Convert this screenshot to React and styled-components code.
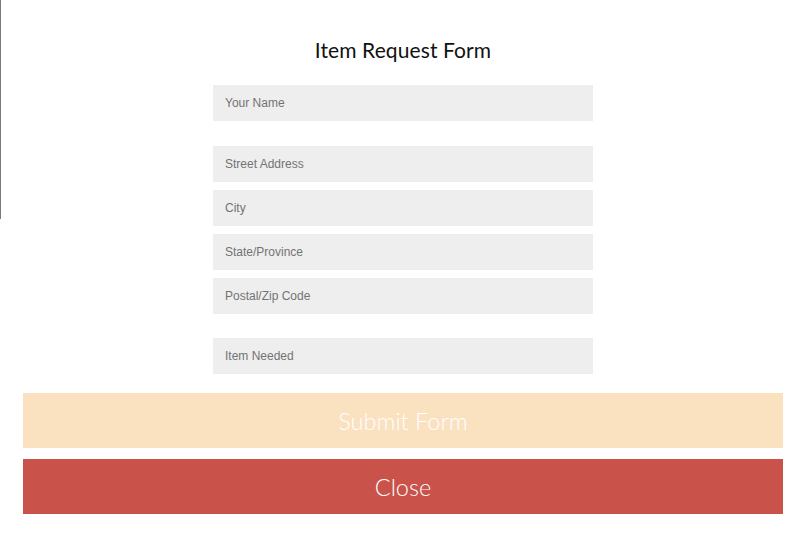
import React from "react";
import styled, { createGlobalStyle } from "styled-components";

const Global = createGlobalStyle`
  html, body { margin: 0; padding: 0; background: #fff; }
  body { font-family: "Lato", "Noto Sans", sans-serif; }
`;

const Page = styled.div`
  position: relative;
  width: 806px;
  height: 546px;
  overflow: hidden;
  background: #fff;
`;

const EdgeLine = styled.div`
  position: absolute;
  left: 0;
  top: 0;
  width: 1px;
  height: 219px;
  background: #7a7a7a;
`;

const Modal = styled.div`
  display: flex;
  flex-direction: column;
  align-items: center;
  padding: 37px 23px 0;
`;

const Title = styled.h1`
  margin: 0 0 22px;
  font-family: "Lato", "Noto Sans", sans-serif;
  font-weight: 400;
  font-size: 21px;
  line-height: 26px;
  color: #111;
  letter-spacing: 0.1px;
`;

const Form = styled.form`
  display: flex;
  flex-direction: column;
  align-items: center;
  width: 100%;
`;

const Group = styled.div`
  display: flex;
  flex-direction: column;
  gap: 8px;
  margin-bottom: ${(p) => p.$after || 0}px;
`;

const Input = styled.input`
  box-sizing: border-box;
  width: 380px;
  height: 36px;
  border: none;
  outline: none;
  background: #eeeeee;
  padding: 0 12px;
  font-family: "Liberation Sans", Arial, sans-serif;
  font-size: 12px;
  color: #333;
  &::placeholder { color: #737373; }
`;

const Button = styled.button`
  box-sizing: border-box;
  width: 100%;
  height: 55px;
  border: none;
  background: ${(p) => p.$bg};
  color: #fff;
  font-family: "Lato", "Noto Sans", sans-serif;
  font-weight: ${(p) => p.$weight || 400};
  font-size: 23.5px;
  margin-top: ${(p) => p.$mt}px;
  cursor: pointer;
`;

export default function App() {
  return (
    <>
      <Global />
      <Page>
        <EdgeLine />
        <Modal>
          <Title>Item Request Form</Title>
          <Form onSubmit={(e) => e.preventDefault()}>
            <Group $after={25}>
              <Input placeholder="Your Name" />
            </Group>
            <Group $after={24}>
              <Input placeholder="Street Address" />
              <Input placeholder="City" />
              <Input placeholder="State/Province" />
              <Input placeholder="Postal/Zip Code" />
            </Group>
            <Group>
              <Input placeholder="Item Needed" />
            </Group>
            <Button type="submit" $bg="#fae1bf" $weight={300} $mt={19}>Submit Form</Button>
            <Button type="button" $bg="#c9524a" $weight={300} $mt={11}>Close</Button>
          </Form>
        </Modal>
      </Page>
    </>
  );
}
